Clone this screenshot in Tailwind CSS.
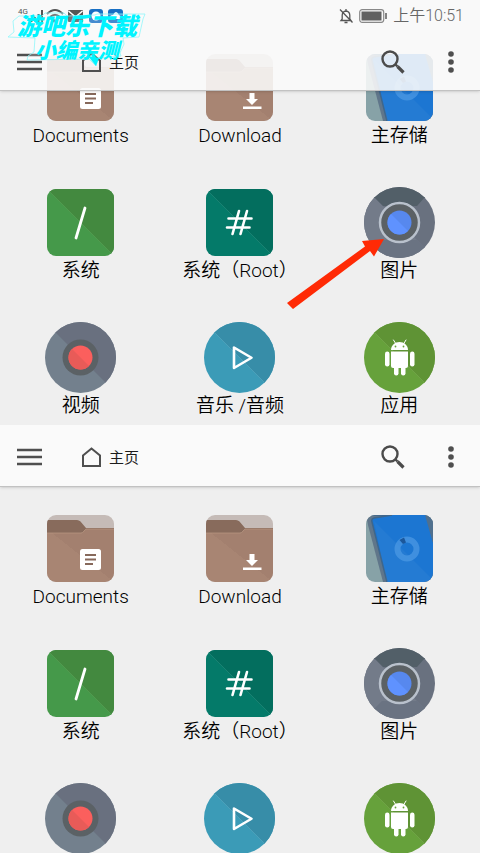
<!DOCTYPE html>
<html lang="zh-CN">
<head>
<meta charset="utf-8">
<meta name="viewport" content="width=device-width, initial-scale=1">
<title>主页</title>
<script src="https://cdn.jsdelivr.net/npm/@tailwindcss/browser@4"></script>
</head>
<body class="h-screen overflow-hidden bg-[#efefef] font-[Roboto,'Noto_Sans_CJK_SC',sans-serif] text-[#1c1c1c]">

<!-- Shared icon definitions -->
<svg class="absolute size-0" aria-hidden="true">
  <defs>
    <clipPath id="tile"><rect x="2" y="2" width="67" height="67" rx="9"/></clipPath>
    <clipPath id="disc"><circle cx="35.5" cy="35.5" r="35.5"/></clipPath>
    <linearGradient id="brown" x1="0" y1="1" x2="1" y2="0"><stop offset=".5" stop-color="#a88573"/><stop offset=".5" stop-color="#a3806f"/></linearGradient>
  </defs>
  <symbol id="folder" viewBox="0 0 71 71">
    <g clip-path="url(#tile)">
      <rect x="2" y="2" width="67" height="67" fill="#c5bbb7"/>
      <path d="M2 7H32Q34 7 35.500 8.500L41 15H69V25H2Z" fill="#886b5c"/>
      <path d="M2 20H36Q38 20 39 18L41 16H69V69H2Z" fill="url(#brown)"/>
      <path d="M2 20H36Q38 20 39 18L41 16H69" fill="none" stroke="#b69582" stroke-width=".8"/>
    </g>
  </symbol>
  <symbol id="documents" viewBox="0 0 71 71">
    <use href="#folder"/>
    <rect x="35" y="36" width="21" height="21" rx="2.500" fill="#fff"/>
    <path d="M40 42H51M40 46.500H51M40 51H48" stroke="#87695b" stroke-width="2"/>
  </symbol>
  <symbol id="download" viewBox="0 0 71 71">
    <use href="#folder"/>
    <path d="M45.500 41H50.500V47H54L48 53L42 47H45.500ZM39 54.500H57.500V57H39Z" fill="#fff"/>
  </symbol>
  <symbol id="storage" viewBox="0 0 71 71">
    <g clip-path="url(#tile)">
      <rect width="71" height="71" fill="#87a2a7"/>
      <path d="M2 2H69V69H19L4 12Z" fill="#60768a"/>
      <path d="M8 8Q7 6 10 5L28 2H62L69 29V69H23Z" fill="#1c76d2"/>
      <path d="M2 2H28L10 5Q7 6 8 9L23 69" fill="none" stroke="#3e668c" stroke-width="1.500"/>
      <path d="M61 2L69 30V2Z" fill="#50708e"/>
      <path d="M10 8L69 67V69H23Z" fill="#fff" fill-opacity=".04"/>
      <circle cx="43" cy="36" r="9.500" fill="none" stroke="#4b98e3" stroke-width="6" stroke-opacity=".75"/>
      <path d="M35.500 27L40 24.500L42 29.500L39 31Z" fill="#1b579b"/>
    </g>
  </symbol>
  <symbol id="system" viewBox="0 0 71 71">
    <g clip-path="url(#tile)"><rect width="71" height="71" fill="#45994a"/><path d="M0 0H71V71Z" fill="#43893f"/><path d="M0 0L71 71" stroke="#59a156" stroke-width=".6"/></g>
    <path d="M40 21L31 51" stroke="#fff" stroke-width="2.800" stroke-linecap="round"/>
  </symbol>
  <symbol id="root" viewBox="0 0 71 71">
    <g clip-path="url(#tile)"><rect width="71" height="71" fill="#047a69"/><path d="M0 0H71V71Z" fill="#036e5e"/><path d="M0 0L71 71" stroke="#288c7c" stroke-width=".6"/></g>
    <path d="M35 24L28.500 47M43 24L36.500 47M24.500 31.500H47.500M23 40.500H45.500" fill="none" stroke="#fff" stroke-width="2.600" stroke-linecap="round"/>
  </symbol>
  <symbol id="pictures" viewBox="0 0 71 71">
    <g clip-path="url(#disc)">
      <rect width="71" height="71" fill="#69717f"/>
      <path d="M10.500 10.500L60.500 60.500L40 71H0V0Z" fill="#737b89"/>
      <path d="M10 10H61L53 19H19Z" fill="#525f68"/><path d="M0 0H71L61 11H10Z" fill="#525f68"/>
      <path d="M18 53H53L61 61V71H10V61Z" fill="#6a7382"/>
    </g>
    <circle cx="35.500" cy="35.500" r="19.500" fill="#5b6165" stroke="#b9c1cc" stroke-width="2.500"/>
    <circle cx="35.500" cy="35.500" r="12" fill="#5788ee"/>
    <path d="M27 27A12 12 0 0 0 44 44Z" fill="#5f92ff"/>
  </symbol>
  <symbol id="video" viewBox="0 0 71 71">
    <g clip-path="url(#disc)"><rect width="71" height="71" fill="#73808d"/><path d="M0 0H71V71Z" fill="#69707f"/></g>
    <circle cx="35.500" cy="35.500" r="18" fill="#5b6165"/>
    <circle cx="35.500" cy="35.500" r="12" fill="#fb5f5d"/>
    <path d="M27 27A12 12 0 0 0 44 44Z" fill="#e85b58"/>
  </symbol>
  <symbol id="audio" viewBox="0 0 71 71">
    <g clip-path="url(#disc)"><rect width="71" height="71" fill="#3b9bb7"/><path d="M0 0H71V71Z" fill="#378da8"/><path d="M0 0L71 71" stroke="#5aa8bf" stroke-width=".6"/></g>
    <path d="M30 25.500V46L47.500 35.750Z" fill="none" stroke="#fff" stroke-width="2.600" stroke-linejoin="round"/>
  </symbol>
  <symbol id="apps" viewBox="0 0 71 71">
    <g clip-path="url(#disc)"><rect width="71" height="71" fill="#66a13b"/><path d="M0 0H71V71Z" fill="#5f9335"/><path d="M0 0L71 71" stroke="#78aa51" stroke-width=".6"/></g>
    <g fill="#fff">
      <path d="M27 28C27 23.500 31 20 35.500 20S44 23.500 44 28Z"/>
      <path d="M29.500 18L32 22M42 18L39.500 22" stroke="#fff" stroke-width="1" stroke-linecap="round"/>
      <path d="M27 29.500H44V44Q44 46 42 46H29Q27 46 27 44Z"/>
      <rect x="21" y="29.500" width="4.500" height="15" rx="2.200"/><rect x="46" y="29.500" width="4.500" height="15" rx="2.200"/>
      <rect x="30" y="43" width="4.500" height="10.500" rx="2.200"/><rect x="37" y="43" width="4.500" height="10.500" rx="2.200"/>
    </g>
    <circle cx="31.500" cy="24.500" r=".9" fill="#66a13b"/><circle cx="39.500" cy="24.500" r=".9" fill="#66a13b"/>
  </symbol>
  <symbol id="menu" viewBox="0 0 26 20"><path d="M0 3H25M0 10H25M0 17H25" stroke="#4f4f4f" stroke-width="2.600"/></symbol>
  <symbol id="home" viewBox="0 0 20 20"><path d="M1 8.500L9.500 1.500L18 8.500V19H1Z" fill="none" stroke="#4f4f4f" stroke-width="2"/></symbol>
  <symbol id="search" viewBox="0 0 24 24"><circle cx="9" cy="9" r="7.500" fill="none" stroke="#4b4b4b" stroke-width="2.400"/><path d="M14.500 14.500L16.500 16.500" stroke="#4b4b4b" stroke-width="2.400"/><path d="M16.500 16.500L22.500 22.500" stroke="#4b4b4b" stroke-width="3.200"/></symbol>
  <symbol id="more" viewBox="0 0 6 22"><g fill="#4f4f4f"><circle cx="3" cy="3" r="2.800"/><circle cx="3" cy="11" r="2.800"/><circle cx="3" cy="19" r="2.800"/></g></symbol>
</svg>

<div class="flex h-full flex-col">

  <section class="relative shrink-0 overflow-hidden pt-[52px] pb-1.5">
    <!-- Translucent bar over scrolled content -->
    <header class="absolute inset-x-0 top-0 z-10 border-b border-[#c2c2c2] bg-[#fafafa]/88 shadow-sm">
      <div class="flex h-[30px] items-center justify-between px-4 text-[#666]">
        <svg class="h-[22px] w-[112px]" viewBox="0 0 112 22" aria-hidden="true">
          <text x="2" y="10" font-size="8" fill="#555">4G</text>
          <path d="M15.500 18V16M19 18V13M22.500 18V10M26 18V6" stroke="#555" stroke-width="2"/>
          <path d="M31 10Q39 2 47 10M34 13Q39 8.500 44 13" fill="none" stroke="#555" stroke-width="2"/><circle cx="39" cy="17" r="1.800" fill="#555"/>
          <rect x="52" y="6" width="15" height="12" rx="1" fill="#555"/><path d="M52.500 7L59.500 13L66.500 7" fill="none" stroke="#fff" stroke-width="1.500"/>
          <rect x="73" y="5" width="14" height="14" rx="3" fill="#176fc4"/><circle cx="80" cy="12" r="4.500" fill="#fff"/>
          <rect x="92" y="5" width="15" height="14" rx="3" fill="#176fc4"/><path d="M94 15Q93 11 97 11Q100 5 103 11Q106 12 104 15Z" fill="#fff"/>
        </svg>
        <div class="flex items-center gap-1.5 pt-0.5">
          <svg class="h-4 w-[14px]" viewBox="0 0 14 16" aria-label="静音"><path d="M2 12.500H12L10.800 11V7Q10.500 3.500 7 3Q3.500 3.500 3.200 7V11ZM7 3V1M5.500 14.500H8.500M1 1.500L13.500 14.500" fill="none" stroke="#555" stroke-width="1.300"/></svg>
          <svg class="h-[14px] w-7" viewBox="0 0 28 14" aria-label="电量"><rect x=".7" y=".7" width="24" height="12.600" rx="2.500" fill="none" stroke="#888" stroke-width="1.200"/><rect x="2.500" y="2.500" width="20" height="9" fill="#606060"/><path d="M27 4V10" stroke="#666" stroke-width="1.600"/></svg>
          <time class="text-[16px] leading-5 font-[350]">上午10:51</time>
        </div>
      </div>
      <div class="flex h-[60px] items-center pt-[3px] pr-[26px] pl-[17px]">
        <button type="button" aria-label="菜单"><svg class="h-5 w-[26px]"><use href="#menu"/></svg></button>
        <a href="#home" class="ml-[39px] flex items-end gap-[7px] text-[15px] leading-[18px]"><svg class="size-5"><use href="#home"/></svg>主页</a>
        <button type="button" class="ml-auto" aria-label="搜索"><svg class="size-6"><use href="#search"/></svg></button>
        <button type="button" class="ml-[43px]" aria-label="更多"><svg class="h-[22px] w-1.5"><use href="#more"/></svg></button>
      </div>
    </header>

    <nav class="grid grid-cols-3 gap-y-[38px] px-px text-[19px] leading-[26px] font-[350] text-black" aria-label="文件夹">
      <a href="#documents" class="flex flex-col items-center"><svg class="size-[71px]"><use href="#documents"/></svg><span class="font-light">Documents</span></a>
      <a href="#download" class="flex flex-col items-center"><svg class="size-[71px]"><use href="#download"/></svg><span class="font-light">Download</span></a>
      <a href="#storage" class="flex flex-col items-center"><svg class="size-[71px]"><use href="#storage"/></svg><span>主存储</span></a>
      <a href="#system" class="flex flex-col items-center"><svg class="size-[71px]"><use href="#system"/></svg><span>系统</span></a>
      <a href="#root" class="flex flex-col items-center"><svg class="size-[71px]"><use href="#root"/></svg><span>系统（<span class="font-light">Root</span>）</span></a>
      <a href="#pictures" class="flex flex-col items-center"><svg class="size-[71px]"><use href="#pictures"/></svg><span>图片</span></a>
      <a href="#video" class="flex flex-col items-center"><svg class="size-[71px]"><use href="#video"/></svg><span>视频</span></a>
      <a href="#audio" class="flex flex-col items-center"><svg class="size-[71px]"><use href="#audio"/></svg><span>音乐 /音频</span></a>
      <a href="#apps" class="flex flex-col items-center"><svg class="size-[71px]"><use href="#apps"/></svg><span>应用</span></a>
    </nav>

    <!-- Pointer to the pictures entry -->
    <svg class="absolute top-[238px] right-[96px] z-20 h-[72px] w-[98px]" viewBox="0 0 98 72" aria-hidden="true"><path d="M98 1L88 18.500L84 13L7 71L1 65L79 8.500L76 3Z" fill="#ff2a05"/></svg>

    <!-- Watermark -->
    <div class="absolute top-[11px] left-[7px] z-20 h-[56px] w-[140px] font-['Noto_Sans_CJK_SC',sans-serif] font-black text-[#00f4ff]">
      <svg class="absolute inset-0 size-full" viewBox="0 0 140 56" aria-hidden="true">
        <path d="M6 10L12 5H35L38 2H57L60 5L88 4L90 3H138L136 8L132 26L116 27L117 33L113 42L114 45L91 47L89 55L82 48L20 49L21 45L27 41L28 27L1 26L7 21Z" fill="#fff" fill-opacity=".2" stroke="#8ff6fa" stroke-width=".8"/>
        <path d="M81 45L92 47L89 55Z" fill="#00f4ff"/>
      </svg>
      <div class="relative flex flex-col items-center italic">
        <p class="text-[24px] leading-[28px] whitespace-nowrap">游吧乐下载</p>
        <p class="text-[21px] leading-[20px] whitespace-nowrap">小编亲测</p>
      </div>
    </div>
  </section>

  <section class="min-h-0 flex-1 overflow-hidden">
    <header class="relative flex h-[62px] items-center border-b border-[#c2c2c2] bg-[#fafafa] pt-[3px] pr-[26px] pl-[17px] shadow-sm">
      <button type="button" aria-label="菜单"><svg class="h-5 w-[26px]"><use href="#menu"/></svg></button>
      <a href="#home" class="ml-[39px] flex items-end gap-[7px] text-[15px] leading-[18px]"><svg class="size-5"><use href="#home"/></svg>主页</a>
      <button type="button" class="ml-auto" aria-label="搜索"><svg class="size-6"><use href="#search"/></svg></button>
      <button type="button" class="ml-[43px]" aria-label="更多"><svg class="h-[22px] w-1.5"><use href="#more"/></svg></button>
    </header>

    <nav class="grid grid-cols-3 gap-y-[38px] px-px pt-[26px] text-[19px] leading-[26px] font-[350] text-black" aria-label="文件夹列表">
      <a href="#documents" class="flex flex-col items-center"><svg class="size-[71px]"><use href="#documents"/></svg><span class="font-light">Documents</span></a>
      <a href="#download" class="flex flex-col items-center"><svg class="size-[71px]"><use href="#download"/></svg><span class="font-light">Download</span></a>
      <a href="#storage" class="flex flex-col items-center"><svg class="size-[71px]"><use href="#storage"/></svg><span>主存储</span></a>
      <a href="#system" class="flex flex-col items-center"><svg class="size-[71px]"><use href="#system"/></svg><span>系统</span></a>
      <a href="#root" class="flex flex-col items-center"><svg class="size-[71px]"><use href="#root"/></svg><span>系统（<span class="font-light">Root</span>）</span></a>
      <a href="#pictures" class="flex flex-col items-center"><svg class="size-[71px]"><use href="#pictures"/></svg><span>图片</span></a>
      <a href="#video" class="flex flex-col items-center" aria-label="视频"><svg class="size-[71px]"><use href="#video"/></svg></a>
      <a href="#audio" class="flex flex-col items-center" aria-label="音乐 /音频"><svg class="size-[71px]"><use href="#audio"/></svg></a>
      <a href="#apps" class="flex flex-col items-center" aria-label="应用"><svg class="size-[71px]"><use href="#apps"/></svg></a>
    </nav>
  </section>
</div>
</body>
</html>
